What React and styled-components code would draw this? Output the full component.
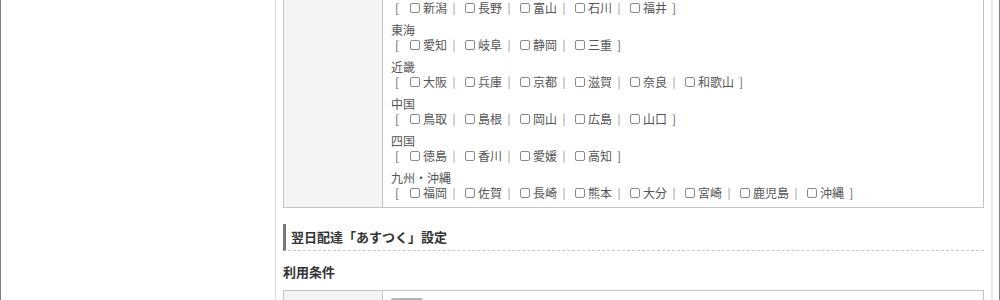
import React from 'react'
import styled, { createGlobalStyle } from 'styled-components'

const GlobalStyle = createGlobalStyle`
  html, body {
    margin: 0;
    padding: 0;
    background: #fff;
    overflow: hidden;
  }
  body {
    font-family: "Noto Sans CJK JP", "Noto Sans", sans-serif;
    color: #555;
  }
`

const Frame = styled.div`
  display: flex;
  width: 1000px;
  height: 300px;
  box-sizing: border-box;
  border-left: 1px solid #808080;
  border-right: 1px solid #808080;
  overflow: hidden;`

const Sidebar = styled.div`
  width: 274px;
  flex-shrink: 0;
  border-right: 1px solid #dcdcdc;`

const Main = styled.div`
  width: 701px;
  padding: 0 7px;
  margin-top: -22px;
  border-right: 2px solid #e8e8e8;
  flex-shrink: 0;`

const Spacer = styled.div`
  flex: 1;`

const Table = styled.div`
  display: flex;
  border: 1px solid #c4c4c4;
  box-sizing: border-box;
  width: 701px;`

const LabelCell = styled.div`
  width: 98px;
  flex-shrink: 0;
  background: #f4f4f4;
  border-right: 1px solid #c4c4c4;`

const ValueCell = styled.div`
  flex: 1;
  padding: 7px 8px;`

const Region = styled.div`
  margin-bottom: 8px;
  &:last-child { margin-bottom: 0; }`

const RegionName = styled.div`
  font-size: 12px;
  line-height: 14px;
  height: 14px;
  color: #555;`

const Row = styled.div`
  display: flex;
  align-items: center;
  height: 15px;
  font-size: 12px;
  line-height: 15px;
  color: #555;
  white-space: nowrap;`

const Bracket = styled.span`
  display: inline-block;
  box-sizing: border-box;
  width: ${p => (p.$close ? 'auto' : '15px')};
  padding-left: ${p => (p.$close ? '5px' : '4px')};
  color: #666;`

const Sep = styled.span`
  display: inline-block;
  width: 14px;
  text-align: center;
  color: #888;
  font-size: 11px;`

const Check = styled.input.attrs({ type: 'checkbox' })`
  appearance: none;
  -webkit-appearance: none;
  width: 10px;
  height: 10px;
  margin: 0 3px 0 4px;
  box-sizing: border-box;
  border: 1px solid #8a8a8a;
  border-radius: 2px;
  background: #fff;
  flex-shrink: 0;`

const Heading = styled.h3`
  margin: 16px 0 0;
  padding: 4px 0 5px 5px;
  font-size: 13px;
  line-height: 17px;
  font-weight: bold;
  color: #333;
  border-left: 3px solid #777;
  border-bottom: 1px dashed #c8c8c8;`

const SubHeading = styled.h4`
  margin: 12px 0 10px;
  font-size: 13px;
  line-height: 17px;
  font-weight: bold;
  color: #333;`

const SmallBox = styled.div`
  width: 32px;
  height: 20px;
  box-sizing: border-box;
  border: 1px solid #b4b4b4;
  border-top-width: 2px;
  border-radius: 2px;`

const regions = [
  { name: '北陸', prefs: ['新潟', '長野', '富山', '石川', '福井'] },
  { name: '東海', prefs: ['愛知', '岐阜', '静岡', '三重'] },
  { name: '近畿', prefs: ['大阪', '兵庫', '京都', '滋賀', '奈良', '和歌山'] },
  { name: '中国', prefs: ['鳥取', '島根', '岡山', '広島', '山口'] },
  { name: '四国', prefs: ['徳島', '香川', '愛媛', '高知'] },
  { name: '九州・沖縄', prefs: ['福岡', '佐賀', '長崎', '熊本', '大分', '宮崎', '鹿児島', '沖縄'] },
]

const PrefRow = ({ prefs }) => (
  <Row>
    <Bracket>[</Bracket>
    {prefs.map((p, i) => (
      <React.Fragment key={p}>
        {i > 0 && <Sep>|</Sep>}
        <label style={{ display: 'contents' }}>
          <Check />
          <span>{p}</span>
        </label>
      </React.Fragment>
    ))}
    <Bracket $close>]</Bracket>
  </Row>
)

const App = () => {
  return (
    <>
      <GlobalStyle />
      <Frame>
        <Sidebar />
        <Main>
          <Table>
            <LabelCell />
            <ValueCell>
              {regions.map(r => (
                <Region key={r.name}>
                  <RegionName>{r.name}</RegionName>
                  <PrefRow prefs={r.prefs} />
                </Region>
              ))}
            </ValueCell>
          </Table>

          <Heading>翌日配達「あすつく」設定</Heading>
          <SubHeading>利用条件</SubHeading>

          <Table>
            <LabelCell />
            <ValueCell>
              <SmallBox />
            </ValueCell>
          </Table>
        </Main>
        <Spacer />
      </Frame>
    </>
  )
}

export default App
